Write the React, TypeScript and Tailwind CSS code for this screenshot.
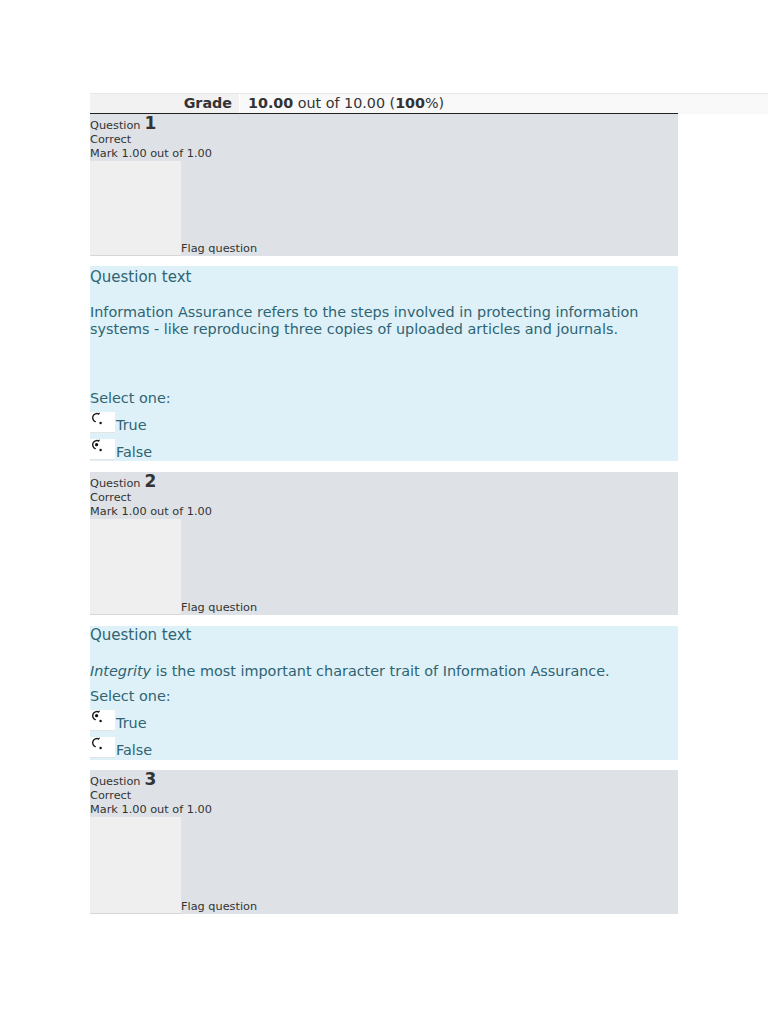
import React from 'react';

type Question = {
  num: number;
  body: React.ReactNode;
  selected: 'True' | 'False';
  topPad: string;
  bodyGap: string;
  selectGap: string;
  height: string;
};

const QUESTIONS: Question[] = [
  {
    num: 1,
    body: (
      <>
        Information Assurance refers to the steps involved in protecting information
        <br />
        systems - like reproducing three copies of uploaded articles and journals.
      </>
    ),
    selected: 'False',
    topPad: 'pt-[2px]',
    bodyGap: 'mt-[18px]',
    selectGap: 'mt-[51px]',
    height: 'h-[195px]'
  },
  {
    num: 2,
    body: (
      <>
        <em>Integrity</em> is the most important character trait of Information Assurance.
      </>
    ),
    selected: 'True',
    topPad: 'pt-0',
    bodyGap: 'mt-[19px]',
    selectGap: 'mt-[7px]',
    height: 'h-[134px]'
  }
];

const RadioGlyph: React.FC<{ checked: boolean }> = ({ checked }) => (
  <svg width="14" height="14" viewBox="0 0 14 14" className="ml-[1px]">
    <path d="M7.6 1.9 A4.2 4.2 0 1 0 4.2 9.6" fill="none" stroke="#1a1a1a" strokeWidth="1.4" strokeLinecap="round" />
    <path d="M7.6 1.9 L8.3 1.2" stroke="#1a1a1a" strokeWidth="1.1" strokeLinecap="round" />
    <circle cx="9.6" cy="11" r="1.2" fill="#111" />
    {checked && <circle cx="5.6" cy="5.7" r="1.6" fill="#111" />}
  </svg>
);

const InfoBlock: React.FC<{ num: number; height: string }> = ({ num, height }) => (
  <div className={`w-[588px] ${height} flex flex-col bg-[#dee2e6] text-[#333] text-[11.3px]`}>
    <div className="flex items-baseline h-[19px] leading-[19px]">
      <span>Question</span>
      <span className="ml-[4px] text-[17px] font-bold">{num}</span>
    </div>
    <div className="leading-[14px]">Correct</div>
    <div className="leading-[14px]">Mark 1.00 out of 1.00</div>
    <div className="flex flex-1 items-end">
      <div className="w-[91px] h-full bg-[#efefef] border-b border-[#d6d6d6]" />
      <div className="leading-[14px]">Flag question</div>
    </div>
  </div>
);

const TextBlock: React.FC<{ q: Question }> = ({ q }) => (
  <div className={`w-[588px] ${q.height} ${q.topPad} bg-[#def1f8] text-[#2f6473] text-[14.4px]`}>
    <div className="leading-[18px] text-[15px]">Question text</div>
    <p className={`${q.bodyGap} leading-[17px]`}>{q.body}</p>
    <div className={`${q.selectGap} leading-[18px]`}>Select one:</div>
    {(['True', 'False'] as const).map(opt => (
      <div key={opt} className="flex h-[27px]">
        <div className="w-[25px] h-[21px] mt-[5px] bg-white border-b border-[#e4e4e4]">
          <RadioGlyph checked={q.selected === opt} />
        </div>
        <span className="ml-[1px] pt-[9px] leading-[18px]">{opt}</span>
      </div>
    ))}
  </div>
);

export default function App() {
  return (
    <div
      className="min-h-[1024px] bg-white pt-[93px] pb-[110px]"
      style={{ fontFamily: '"DejaVu Sans", "Noto Sans", sans-serif' }}
    >
      <div className="ml-[90px] bg-[#f9f9f9] border-t border-[#e8e8e8]">
        <div className="w-[588px] flex h-[20px] border-b border-[#222] text-[14.3px] text-[#333] leading-[19px]">
          <div className="w-[150px] bg-[#f2f2f2] border-r border-white text-right pr-[7px] font-bold">Grade</div>
          <div className="pl-[8px]">
            <b>10.00</b> out of 10.00 (<b>100</b>%)
          </div>
        </div>
      </div>

      <div className="ml-[90px] flex flex-col">
        <InfoBlock num={1} height="h-[142px]" />
        <div className="h-[10px]" />
        <TextBlock q={QUESTIONS[0]} />
        <div className="h-[11px]" />
        <InfoBlock num={2} height="h-[143px]" />
        <div className="h-[11px]" />
        <TextBlock q={QUESTIONS[1]} />
        <div className="h-[10px]" />
        <InfoBlock num={3} height="h-[144px]" />
      </div>
    </div>
  );
}
